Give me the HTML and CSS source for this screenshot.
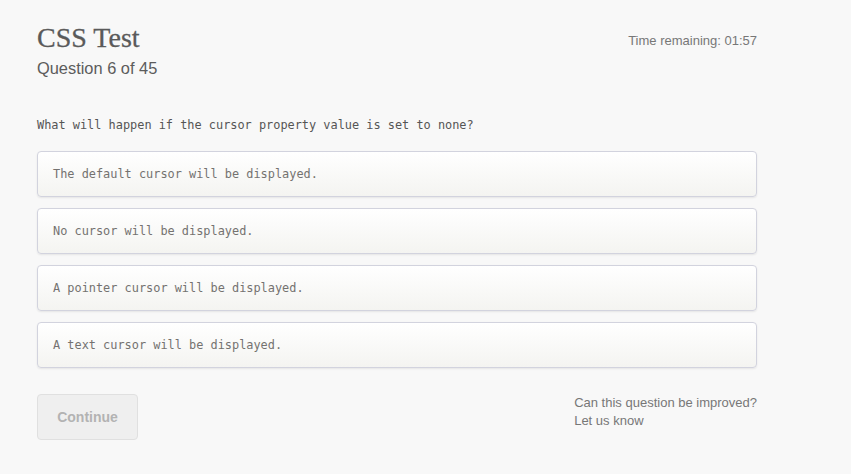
FILE: index.html
```html
<!DOCTYPE html>
<html>
<head>
<meta charset="utf-8">
<link rel="stylesheet" href="styles.css">
</head>
<body>
<div class="page">
  <header class="head">
    <div>
      <h1 class="title">CSS Test</h1>
      <div class="subtitle">Question 6 of 45</div>
    </div>
    <div class="timer">Time remaining: 01:57</div>
  </header>
  <p class="question">What will happen if the cursor property value is set to none?</p>
  <div class="options">
    <div class="option">The default cursor will be displayed.</div>
    <div class="option">No cursor will be displayed.</div>
    <div class="option">A pointer cursor will be displayed.</div>
    <div class="option">A text cursor will be displayed.</div>
  </div>
  <div class="foot">
    <button class="continue">Continue</button>
    <div class="improve">
      <div>Can this question be improved?</div>
      <div>Let us know</div>
    </div>
  </div>
</div>
</body>
</html>
```
FILE: styles.css
```css
html, body { margin: 0; padding: 0; background: #f8f8f8; }
body { font-family: "Liberation Sans", Arial, sans-serif; color: #666; }
.page { width: 720px; padding: 22px 0 0 37px; }
.head { display: flex; justify-content: space-between; align-items: flex-start; }
.title { margin: 0; font-family: "Liberation Serif", serif; font-weight: normal; font-size: 28px; line-height: 32px; color: #5a5a5a; -webkit-text-stroke: 0.3px #5a5a5a; }
.subtitle { font-size: 16.4px; line-height: 22px; color: #5c5c5c; margin-top: 3px; }
.timer { font-size: 13px; color: #777; margin-top: 11px; }
.question { font-family: "DejaVu Sans Mono", monospace; font-size: 11.9px; color: #555; margin: 38px 0 18px; line-height: 16px; }
.options { display: flex; flex-direction: column; gap: 11px; }
.option { height: 44px; box-sizing: content-box; border: 1px solid #d2d3de; border-radius: 4px; background: linear-gradient(#ffffff, #f4f4f1); box-shadow: 0 1px 2px rgba(0,0,0,0.08); padding: 0 15px; display: flex; align-items: center; font-family: "DejaVu Sans Mono", monospace; font-size: 11.9px; color: #747270; }
.foot { display: flex; justify-content: space-between; align-items: flex-start; margin-top: 26px; }
.continue { width: 101px; height: 46px; background: #efefef; border: 1px solid #e0e0e0; border-radius: 4px; font-family: "Liberation Sans", Arial, sans-serif; font-weight: bold; font-size: 14px; color: #b3b3b3; padding: 0; }
.improve { font-size: 13px; color: #777; line-height: 18px; white-space: nowrap; text-align: left; margin-top: 0; }
```
